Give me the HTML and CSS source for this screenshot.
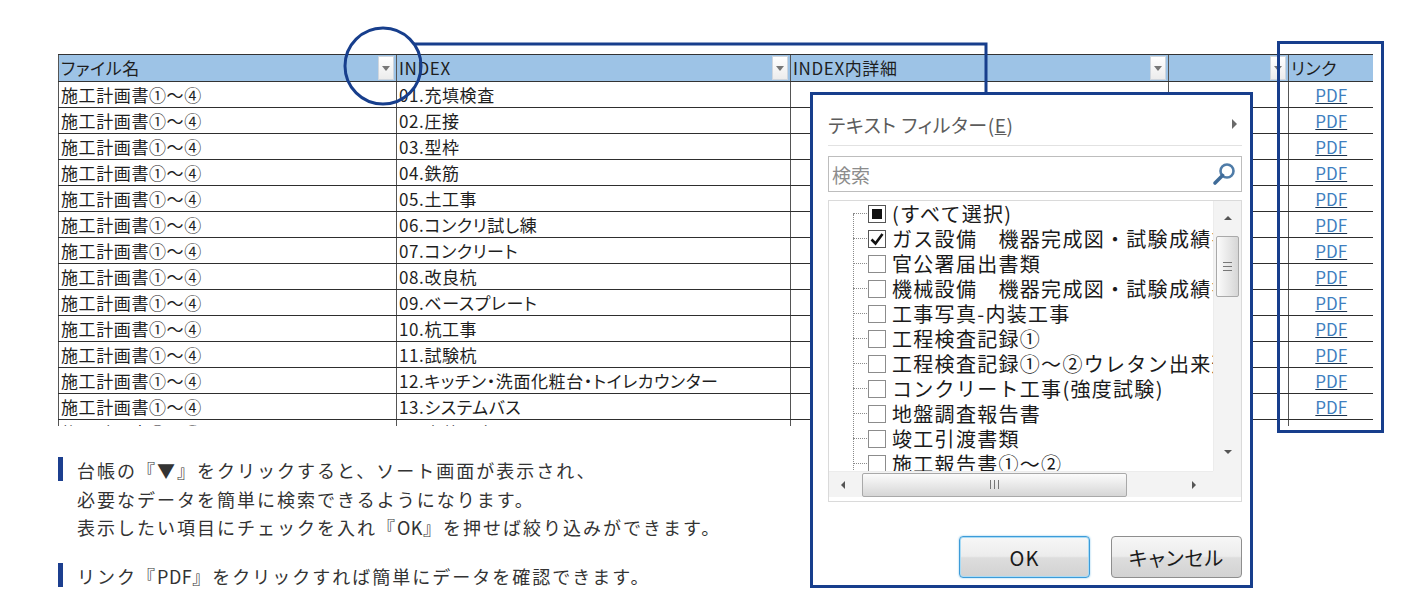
FILE: index.html
```html
<!DOCTYPE html>
<html lang="ja">
<head>
    <meta charset="UTF-8">
    <meta name="viewport" content="width=device-width, initial-scale=1.0">
    <title>台帳の検索と絞り込み</title>
    <link rel="stylesheet" href="styles.css">
</head>
<body>
    <div class="page">
        <!-- ledger sheet -->
        <div class="ledger">
            <table class="sheet">
                <colgroup>
                    <col class="c-file">
                    <col class="c-index">
                    <col class="c-detail">
                    <col class="c-extra">
                    <col class="c-link">
                </colgroup>
                <thead>
                    <tr>
                        <th><div class="head-cell"><span>ファイル名</span><span class="drop"></span></div></th>
                        <th><div class="head-cell"><span>INDEX</span><span class="drop"></span></div></th>
                        <th><div class="head-cell"><span>INDEX内詳細</span><span class="drop"></span></div></th>
                        <th><div class="head-cell"><span></span><span class="drop"></span></div></th>
                        <th><div class="head-cell"><span>リンク</span></div></th>
                    </tr>
                </thead>
                <tbody>
                    <tr><td>施工計画書①～④</td><td>01.充填検査</td><td></td><td></td><td class="link"><a href="#">PDF</a></td></tr>
                    <tr><td>施工計画書①～④</td><td>02.圧接</td><td></td><td></td><td class="link"><a href="#">PDF</a></td></tr>
                    <tr><td>施工計画書①～④</td><td>03.型枠</td><td></td><td></td><td class="link"><a href="#">PDF</a></td></tr>
                    <tr><td>施工計画書①～④</td><td>04.鉄筋</td><td></td><td></td><td class="link"><a href="#">PDF</a></td></tr>
                    <tr><td>施工計画書①～④</td><td>05.土工事</td><td></td><td></td><td class="link"><a href="#">PDF</a></td></tr>
                    <tr><td>施工計画書①～④</td><td>06.コンクリ試し練</td><td></td><td></td><td class="link"><a href="#">PDF</a></td></tr>
                    <tr><td>施工計画書①～④</td><td>07.コンクリート</td><td></td><td></td><td class="link"><a href="#">PDF</a></td></tr>
                    <tr><td>施工計画書①～④</td><td>08.改良杭</td><td></td><td></td><td class="link"><a href="#">PDF</a></td></tr>
                    <tr><td>施工計画書①～④</td><td>09.ベースプレート</td><td></td><td></td><td class="link"><a href="#">PDF</a></td></tr>
                    <tr><td>施工計画書①～④</td><td>10.杭工事</td><td></td><td></td><td class="link"><a href="#">PDF</a></td></tr>
                    <tr><td>施工計画書①～④</td><td>11.試験杭</td><td></td><td></td><td class="link"><a href="#">PDF</a></td></tr>
                    <tr><td>施工計画書①～④</td><td>12.キッチン・洗面化粧台・トイレカウンター</td><td></td><td></td><td class="link"><a href="#">PDF</a></td></tr>
                    <tr><td>施工計画書①～④</td><td>13.システムバス</td><td></td><td></td><td class="link"><a href="#">PDF</a></td></tr>
                    <tr><td>施工計画書①～④</td><td>14.内装工事</td><td></td><td></td><td class="link"><a href="#">PDF</a></td></tr>
                </tbody>
            </table>
        </div>

        <!-- explanation -->
        <div class="notes">
            <p class="note">台帳の『▼』をクリックすると、ソート画面が表示され、<br>必要なデータを簡単に検索できるようになります。<br>表示したい項目にチェックを入れ『<span class="latin">OK</span>』を押せば絞り込みができます。</p>
            <p class="note">リンク『<span class="latin">PDF</span>』をクリックすれば簡単にデータを確認できます。</p>
        </div>

        <!-- callout marks -->
        <svg class="marks" width="1410" height="605" viewBox="0 0 1410 605">
            <circle cx="383" cy="66" r="38"/>
            <polyline points="414,44 986,44 986,93"/>
            <rect x="1278.5" y="42.5" width="104" height="389"/>
        </svg>

        <!-- autofilter dropdown -->
        <div class="filter-pop">
            <div class="menu-row">
                <span>テキスト フィルター(<u>E</u>)</span>
                <span class="menu-arrow"></span>
            </div>
            <div class="search">
                <span>検索</span>
                <svg width="26" height="26" viewBox="0 0 26 26">
                    <circle cx="16" cy="10" r="6.5" fill="none" stroke="#4f7ca8" stroke-width="2.6"/>
                    <line x1="11.5" y1="14.5" x2="4" y2="22" stroke="#3f6b98" stroke-width="3.6" stroke-linecap="round"/>
                </svg>
            </div>
            <div class="list">
                <div class="list-view">
                    <ul class="tree">
                        <li><span class="box mixed"></span>(すべて選択)</li>
                        <li><span class="box checked"><svg width="14" height="14" viewBox="0 0 14 14"><path d="M1.5 7.5 L5.5 11.5 L12.5 2" fill="none" stroke="#111" stroke-width="2.6"/></svg></span>ガス設備　機器完成図・試験成績書</li>
                        <li><span class="box"></span>官公署届出書類</li>
                        <li><span class="box"></span>機械設備　機器完成図・試験成績書</li>
                        <li><span class="box"></span>工事写真-内装工事</li>
                        <li><span class="box"></span>工程検査記録①</li>
                        <li><span class="box"></span>工程検査記録①～②ウレタン出来形</li>
                        <li><span class="box"></span>コンクリート工事(強度試験)</li>
                        <li><span class="box"></span>地盤調査報告書</li>
                        <li><span class="box"></span>竣工引渡書類</li>
                        <li><span class="box"></span>施工報告書①～②</li>
                    </ul>
                </div>
                <div class="vscroll">
                    <span class="arrow up"></span>
                    <span class="thumb v"></span>
                    <span class="arrow down"></span>
                </div>
                <div class="hscroll">
                    <span class="arrow left"></span>
                    <span class="thumb h"></span>
                    <span class="arrow right"></span>
                </div>
                <div class="corner"></div>
            </div>
            <div class="actions">
                <button class="btn btn-ok">OK</button>
                <button class="btn">キャンセル</button>
            </div>
        </div>
    </div>
</body>
</html>
```

FILE: styles.css
```css
* {
    box-sizing: border-box;
    margin: 0;
    padding: 0;
}

body {
    background-color: #fff;
    font-family: "Noto Sans CJK JP", "Noto Sans", sans-serif;
    color: #222;
}

.page {
    position: relative;
    width: 1410px;
    height: 605px;
    padding: 54px 0 0 58px;
    overflow: hidden;
}

/* ---------- sheet ---------- */

.ledger {
    width: 1315px;
    height: 372px;
    overflow: hidden;
}

.sheet {
    width: 1315px;
    table-layout: fixed;
    border-collapse: collapse;
    font-size: 17px;
    letter-spacing: 0.6px;
    font-feature-settings: "palt";
}

.c-file { width: 338px; }
.c-index { width: 394px; }
.c-detail { width: 378px; }
.c-extra { width: 120px; }
.c-link { width: 85px; }

.sheet th,
.sheet td {
    height: 26px;
    padding: 0 2px;
    border-bottom: 1px solid #2e2e2e;
    border-left: 1px solid #555;
    white-space: nowrap;
    overflow: hidden;
    text-align: left;
    font-weight: normal;
    line-height: 22px;
    color: #1e1e1e;
}

.sheet th {
    height: 27px;
    padding: 0 1px 0 2px;
    background-color: #9dc3e6;
    border-top: 1px solid #333;
    border-bottom: 1px solid #333;
}

.head-cell {
    display: flex;
    align-items: center;
    justify-content: space-between;
    height: 25px;
}

.drop {
    width: 16px;
    height: 24px;
    margin-right: 1px;
    background: linear-gradient(#ffffff, #ececec);
    border: 1px solid #cfd6de;
    display: flex;
    align-items: center;
    justify-content: center;
}

.drop::after {
    content: "";
    border-left: 4px solid transparent;
    border-right: 4px solid transparent;
    border-top: 5px solid #777;
}

.sheet td.link {
    text-align: center;
}

.link a {
    color: #3f7fbf;
    text-decoration: underline;
    text-decoration-color: #1d3550;
    letter-spacing: 0;
}

/* ---------- notes ---------- */

.notes {
    margin-top: 30px;
    font-size: 18px;
    letter-spacing: 2px;
    line-height: 28.5px;
    color: #333;
}

.note {
    padding-left: 19px;
    background: linear-gradient(#1c3f8f, #1c3f8f) no-repeat 0 1px / 5px 24px;
}

.note + .note {
    margin-top: 20px;
}

.latin {
    letter-spacing: 0.5px;
}

/* ---------- callout marks ---------- */

.marks {
    position: absolute;
    left: 0;
    top: 0;
    pointer-events: none;
}

.marks circle,
.marks polyline,
.marks rect {
    fill: none;
    stroke: #173e8c;
    stroke-width: 3;
}

/* ---------- filter dropdown ---------- */

.filter-pop {
    position: absolute;
    left: 810px;
    top: 92px;
    width: 443px;
    height: 496px;
    padding: 8px 8px 0 15px;
    background-color: #fff;
    border: 3px solid #173e8c;
}

.menu-row {
    height: 43px;
    display: flex;
    align-items: center;
    justify-content: space-between;
    padding-right: 5px;
    border-bottom: 1px solid #e2e2e2;
    font-size: 19px;
    letter-spacing: 0.6px;
    font-feature-settings: "palt";
    color: #5c5c5c;
}

.menu-arrow {
    border-top: 5px solid transparent;
    border-bottom: 5px solid transparent;
    border-left: 5px solid #6a6a6a;
}

.search {
    margin-top: 10px;
    height: 36px;
    display: flex;
    align-items: center;
    justify-content: space-between;
    padding: 0 4px 0 3px;
    border: 1px solid #bdbdbd;
    font-size: 19px;
    color: #8c8c8c;
}

.list {
    margin-top: 8px;
    height: 302px;
    padding-bottom: 4px;
    border: 1px solid #dadada;
    display: grid;
    grid-template-columns: 1fr 28px;
    grid-template-rows: 1fr 26px;
}

.list-view {
    overflow: hidden;
}

.tree {
    position: relative;
    list-style: none;
    margin-left: 24px;
    font-size: 20px;
    letter-spacing: 1.3px;
    color: #1a1a1a;
}

.tree::before {
    content: "";
    position: absolute;
    left: 0;
    top: 13px;
    bottom: 0;
    border-left: 1px dotted #8a8a8a;
}

.tree li {
    position: relative;
    height: 25px;
    display: flex;
    align-items: center;
    padding-left: 15px;
    white-space: nowrap;
}

.tree li::before {
    content: "";
    position: absolute;
    left: 0;
    top: 12px;
    width: 14px;
    border-top: 1px dotted #8a8a8a;
}

.box {
    flex: none;
    width: 18px;
    height: 18px;
    margin-right: 6px;
    border: 1px solid #8c8c8c;
    background-color: #fff;
    display: flex;
    align-items: center;
    justify-content: center;
}

.box.mixed,
.box.checked {
    border-color: #555;
}

.box.mixed::after {
    content: "";
    width: 10px;
    height: 10px;
    background-color: #111;
}

/* scroll bars */

.vscroll,
.hscroll,
.corner {
    background-color: #f3f3f3;
}

.vscroll {
    display: flex;
    flex-direction: column;
    align-items: center;
    border-left: 1px solid #ececec;
}

.hscroll {
    display: flex;
    align-items: center;
    border-top: 1px solid #ececec;
}

.arrow {
    flex: none;
    width: 27px;
    height: 28px;
    display: flex;
    align-items: center;
    justify-content: center;
}

.vscroll .arrow {
    height: 34px;
}

.vscroll .arrow.down {
    margin-top: auto;
    margin-bottom: 2px;
}

.arrow::after {
    content: "";
    border: 4px solid transparent;
}

.arrow.up::after { border-bottom: 4px solid #555; border-top-width: 0; }
.arrow.down::after { border-top: 4px solid #555; border-bottom-width: 0; }
.arrow.left::after { border-right: 4px solid #555; border-left-width: 0; }
.arrow.right::after { border-left: 4px solid #555; border-right-width: 0; }

.hscroll .arrow.right {
    margin-left: auto;
    margin-right: 6px;
}

.thumb {
    flex: none;
    border: 1px solid #a9a9a9;
    border-radius: 2px;
    display: flex;
    align-items: center;
    justify-content: center;
}

.thumb.v {
    width: 23px;
    height: 61px;
    margin-top: 1px;
    background: linear-gradient(to right, #fbfbfb, #e9e9e9 50%, #d6d6d6);
}

.thumb.h {
    width: 265px;
    height: 24px;
    margin-left: 6px;
    background: linear-gradient(#fbfbfb, #e9e9e9 50%, #d6d6d6);
}

.thumb::after {
    content: "";
    width: 9px;
    height: 9px;
}

.thumb.v::after {
    background: repeating-linear-gradient(#777 0 1px, transparent 1px 4px);
}

.thumb.h::after {
    background: repeating-linear-gradient(to right, #777 0 1px, transparent 1px 4px);
}

/* buttons */

.actions {
    margin-top: 34px;
    display: flex;
    justify-content: flex-end;
    gap: 21px;
}

.btn {
    width: 131px;
    height: 42px;
    border: 1px solid #8e8e8e;
    border-radius: 4px;
    background: linear-gradient(#f7f7f7, #ececec 48%, #dddddd 52%, #d2d2d2);
    font-family: inherit;
    font-size: 20px;
    font-feature-settings: "palt";
    letter-spacing: 1px;
    color: #1a1a1a;
}

.btn-ok {
    border-color: #3d9bd8;
    box-shadow: inset 0 0 0 1px #a9dbf5, 0 0 2px #7cc0ea;
}
```
